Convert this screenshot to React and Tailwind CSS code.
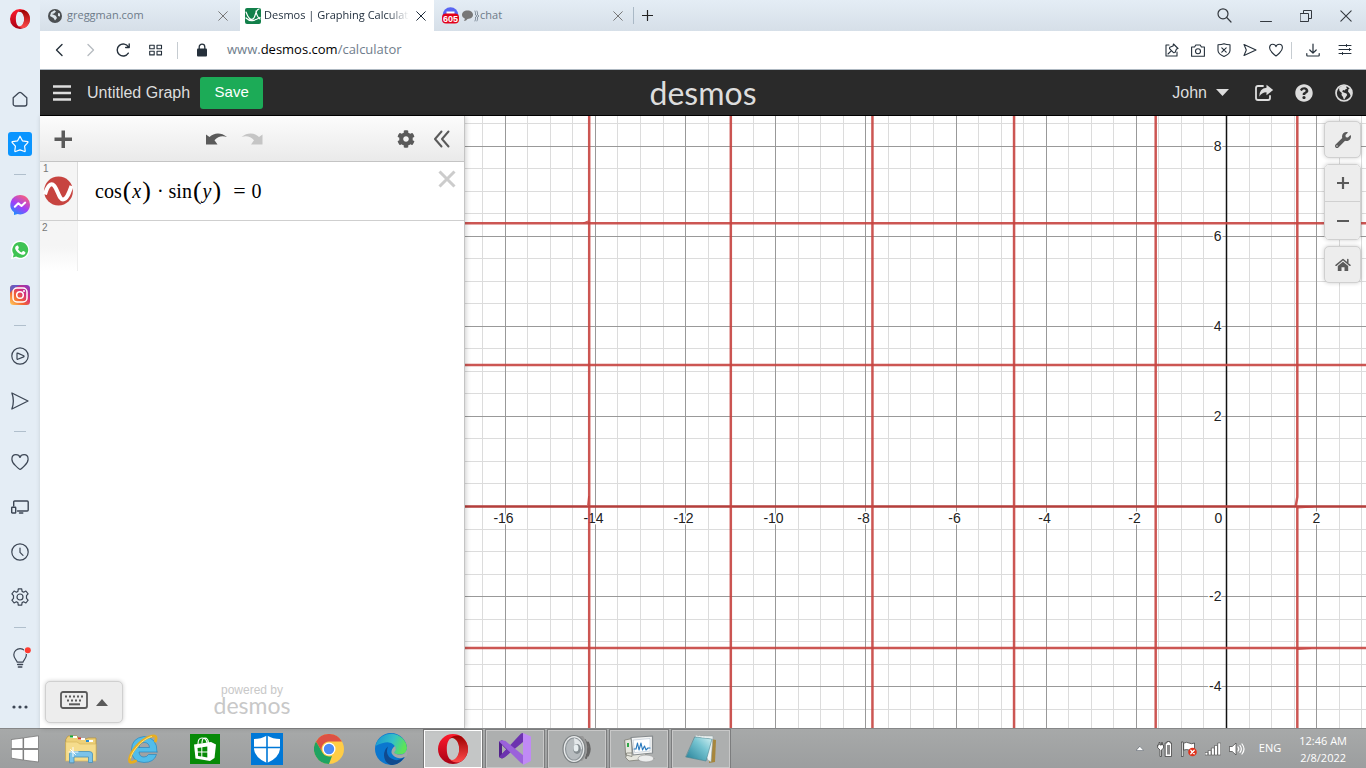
import React, { useLayoutEffect, useRef, useState } from "react";
import { FaWrench, FaCog, FaQuestionCircle } from "react-icons/fa";

const UI = "font-['Open_Sans','Noto_Sans',sans-serif]";
const ARIAL = "font-['Liberation_Sans',Arial,sans-serif]";

function Icon({ w = 20, h, vb, children, className = "", sw = 1.2, color = "currentColor" }) {
  const hh = h || w;
  return (
    <svg
      width={w}
      height={hh}
      viewBox={vb || `0 0 ${w} ${hh}`}
      fill="none"
      stroke={color}
      strokeWidth={sw}
      strokeLinecap="round"
      strokeLinejoin="round"
      aria-hidden="true"
      className={`shrink-0 ${className}`}
    >
      {children}
    </svg>
  );
}

function OperaLogo({ size, id }) {
  return (
    <Icon w={size} vb="0 0 30 30" color="none">
      <defs>
        <linearGradient id={`${id}a`} x1="0" y1="0" x2="0" y2="1">
          <stop offset="0" stopColor="#ff1b2d" />
          <stop offset="1" stopColor="#a70014" />
        </linearGradient>
        <linearGradient id={`${id}b`} x1="0" y1="0" x2="0" y2="1">
          <stop offset="0" stopColor="#9c0000" />
          <stop offset="1" stopColor="#ff4b4b" />
        </linearGradient>
      </defs>
      <path
        fillRule="evenodd"
        fill={`url(#${id}a)`}
        d="M15 0a15 15 0 1 0 0 30a15 15 0 1 0 0-30zM15 3.500c4 0 6.200 5.200 6.200 11.500S19 26.500 15 26.500S8.800 21.300 8.800 15S11 3.500 15 3.500z"
      />
      <path
        fill={`url(#${id}b)`}
        d="M11.500 4.800C16 .5 22 .8 25 3.900A15 15 0 0 1 25 26.100C22 29.200 16 29.500 11.500 25.200C16.500 28 21.200 22 21.200 15S16.500 2 11.500 4.800z"
      />
    </Icon>
  );
}

function SideItem({ label, children }) {
  return (
    <button aria-label={label} className="flex h-[45px] w-10 shrink-0 items-center justify-center">
      {children}
    </button>
  );
}

function Separator() {
  return (
    <div className="flex h-4 w-10 shrink-0 items-center justify-center">
      <div className="h-px w-3 bg-[#b0bfcc]" />
    </div>
  );
}

function Sidebar() {
  return (
    <nav aria-label="Browser sidebar" className="flex w-10 shrink-0 flex-col bg-[#e4edf5] text-[#3c4654]">
      <button aria-label="Opera menu" className="mb-[38px] flex h-10 items-center justify-center">
        <OperaLogo size={20} id="menu" />
      </button>
      <SideItem label="Home">
        <Icon w={16} sw={1.3}>
          <path d="M1.200 6.800L6.500 2Q8 .8 9.500 2l5.300 4.800V13a2 2 0 0 1-2 2H3.200a2 2 0 0 1-2-2z" />
        </Icon>
      </SideItem>
      <SideItem label="Speed dials">
        <span className="flex size-6 items-center justify-center rounded-[3px] bg-[#0a95ff] text-white">
          <Icon w={18} sw={1.2}>
            <path d="M9 1.200l2.400 4.600l5.200 .8a.6 .6 0 0 1 .2 1L13.600 11.200l.6 4.800q0 .7-.7 .5L9 14.900L4.500 16.500q-.7 .2-.7-.5l.6-4.800L1.200 7.600a.6 .6 0 0 1 .2-1l5.200-.8z" />
          </Icon>
        </span>
      </SideItem>
      <Separator />
      <SideItem label="Messenger">
        <Icon w={20} color="none">
          <defs>
            <linearGradient id="msg" x1=".2" y1="1" x2=".8" y2="0">
              <stop offset="0" stopColor="#1592ff" />
              <stop offset=".45" stopColor="#a040fa" />
              <stop offset="1" stopColor="#ff6273" />
            </linearGradient>
          </defs>
          <path fill="url(#msg)" d="M10 0a10 9.700 0 1 1-2.500 19.100L4 20v-2.800A9.700 9.700 0 0 1 10 0z" />
          <path stroke="#fff" strokeWidth="2" d="M4.800 11.800L8.300 8.300L11.500 11L15.200 7.600" />
        </Icon>
      </SideItem>
      <SideItem label="WhatsApp">
        <Icon w={20} color="none">
          <path fill="#fff" d="M10.300 .6a9.300 9.300 0 1 1-4.600 17.500L.9 19.300l1.300-4.700A9.300 9.300 0 0 1 10.300 .6z" />
          <path fill="#3fc353" d="M10.300 2a7.900 7.900 0 1 1-4.200 14.600L2.900 17.400l.8-3.100A7.900 7.900 0 0 1 10.300 2z" />
          <path fill="#fff" d="M7.200 5.400c.5 0 .7 0 1 .7l.6 1.500c.2 .5-.2 .9-.8 1.600c1 1.700 2.100 2.500 3.600 3.200l1.100-1.200c.3-.3 .5-.2 .8-.1l1.600 .8c.5 .3 .3 1.300 0 1.800c-.8 1.200-2.400 1.300-3.800 .8c-3-1-5-3-6-5.400c-.6-1.500 .4-3.600 1.900-3.700z" />
        </Icon>
      </SideItem>
      <SideItem label="Instagram">
        <Icon w={20} color="none">
          <defs>
            <linearGradient id="ig" x1="0" y1="1" x2="1" y2="0">
              <stop offset="0" stopColor="#ffd060" />
              <stop offset=".35" stopColor="#f4662f" />
              <stop offset=".65" stopColor="#d42f7f" />
              <stop offset="1" stopColor="#7d3ac8" />
            </linearGradient>
          </defs>
          <rect width="20" height="20" rx="3.500" fill="url(#ig)" />
          <path fill="#4b62d8" opacity=".8" d="M0 8V3.500A3.500 3.500 0 0 1 3.500 0H11Q4 2 0 8z" />
          <rect x="3" y="3" width="14" height="14" rx="4" stroke="#fff" strokeWidth="1.500" />
          <circle cx="10" cy="10" r="3.300" stroke="#fff" strokeWidth="1.500" />
          <circle cx="14" cy="6" r="1" fill="#fff" />
        </Icon>
      </SideItem>
      <Separator />
      <SideItem label="Player">
        <Icon w={18}>
          <circle cx="9" cy="9" r="8.200" />
          <path d="M6 6.500v5.300q0 .7 .7 .5l6-2.400q.8-.6 0-1.200l-6-2.600q-.7-.2-.7 .4z" />
        </Icon>
      </SideItem>
      <SideItem label="My Flow">
        <Icon w={18} sw={1.300}>
          <path d="M.9 1L17 9L.9 17Q3.800 9 .9 1z" />
        </Icon>
      </SideItem>
      <Separator />
      <SideItem label="Bookmarks">
        <Icon w={18}>
          <path d="M9 16.300Q7.800 16 4.500 12.700C2 10.300 .9 8.400 .9 6.200C.9 3.600 2.600 1.700 4.900 1.700C6.900 1.700 8.500 2.800 9 4.500C9.500 2.800 11.100 1.700 13.100 1.700c2.300 0 4 1.900 4 4.500c0 2.200-1.100 4.100-3.600 6.500Q10.200 16 9 16.300z" />
        </Icon>
      </SideItem>
      <SideItem label="Connect devices">
        <Icon w={18} h={14} sw={1.400}>
          <path d="M2.700 6V2q0-1 1-1h12.500q1 0 1 1v8q0 1-1 1H6.500M8.500 13h3.300" />
          <rect x=".7" y="7.200" width="4" height="5.800" rx=".6" />
        </Icon>
      </SideItem>
      <SideItem label="History">
        <Icon w={18}>
          <circle cx="9" cy="9" r="8.200" />
          <path d="M9 5v4.400l3 3" />
        </Icon>
      </SideItem>
      <SideItem label="Settings">
        <Icon w={18}>
          <circle cx="9" cy="9" r="3" />
          <path d="M7.300 .9h3.400l.4 2.500l1.500 .8l2.300-1.200l2.200 2.800l-1.600 1.800v2.800l1.600 1.800l-2.200 2.800l-2.300-1.200l-1.500 .8l-.4 2.500H7.300l-.4-2.500l-1.500-.8L3.100 15L.9 12.200l1.600-1.800V7.600L.9 5.800L3.100 3l2.300 1.200l1.500-.8z" />
        </Icon>
      </SideItem>
      <Separator />
      <SideItem label="Tips">
        <Icon w={22}>
          <path d="M8.200 15.200C8 13 4.800 12 4.800 7.800A6.300 6.300 0 0 1 11.100 1.600a6.300 6.300 0 0 1 6.300 6.200c0 4.200-3.200 5.200-3.400 7.400z" />
          <path d="M8.700 17.500h4.800M9.400 20h3.400" strokeWidth="1.500" />
          <circle cx="18.800" cy="3.200" r="3.900" fill="#e4edf5" stroke="none" />
          <circle cx="18.800" cy="3.200" r="3" fill="#ff3b30" stroke="none" />
        </Icon>
      </SideItem>
      <button aria-label="More" className="mt-[5px] flex h-[45px] items-center justify-center">
        <Icon w={16} h={4} color="none">
          <circle cx="2" cy="2" r="1.600" fill="#3c4654" />
          <circle cx="8" cy="2" r="1.600" fill="#3c4654" />
          <circle cx="14" cy="2" r="1.600" fill="#3c4654" />
        </Icon>
      </button>
    </nav>
  );
}

function Cross({ w = 10, className = "", sw = 1 }) {
  return (
    <Icon w={w} vb="0 0 10 10" sw={sw} className={className}>
      <path d="M.7 .7L9.300 9.300M9.300 .7L.7 9.300" />
    </Icon>
  );
}

function TabBar() {
  return (
    <div className={`flex h-[31px] shrink-0 items-stretch bg-linear-to-b from-[#e4edf5] to-[#d6dfe8] text-[11px] ${UI}`}>
      <div className="flex w-[200px] items-center pr-3 pl-2 text-[#6d7b89]">
        <Icon w={14} color="none">
          <circle cx="7" cy="7" r="7" fill="#4b4f52" />
          <path fill="#dce5ec" d="M3 3.500L6.500 1.200L8 2.500L6 4.500L3.800 5L7.800 6.800L9 9L7 11.500L5.500 9L2 7zM10 4l2 .5v3L10 7z" />
        </Icon>
        <button className="ml-[5px] flex-1 text-left">greggman.com</button>
        <button aria-label="Close greggman.com" className="text-[#777]"><Cross /></button>
      </div>
      <div className="flex w-[194px] items-center bg-white pr-2 pl-[5px] text-[#1d2b3a]">
        <Icon w={16} color="none">
          <rect width="16" height="16" rx="2" fill="#12804a" />
          <path stroke="#fff" strokeWidth="1.200" d="M1 4C3 10 6 13 8.500 10.500S10 2 14 1M1 10C5 14 9 13 15 9.500M11 3Q12 9 15 11" />
        </Icon>
        <button className="ml-[3px] w-[145px] overflow-hidden mask-r-from-85% text-left whitespace-nowrap">
          Desmos | Graphing Calculator
        </button>
        <button aria-label="Close Desmos" className="ml-auto"><Cross /></button>
      </div>
      <div className="flex w-[200px] items-center pr-[11px] pl-2 text-[#6d7b89]">
        <Icon w={17} color="none">
          <circle cx="8.500" cy="8" r="7.800" fill="#5865f2" />
          <path fill="#fff" d="M4.500 4.500h8V7h-8z" />
          <rect x="0" y="6.500" width="17" height="10" rx="4" fill="#e3001b" />
          <text x="8.500" y="14.500" fill="#fff" fontSize="9" fontWeight="700" textAnchor="middle" fontFamily="Liberation Sans, sans-serif">605</text>
        </Icon>
        <button className="ml-[2px] flex flex-1 items-center">
          <Icon w={13} color="none">
            <path fill="#777" d="M6.500 1.500C10 1.500 12 3.500 12 5.800S10 10 6.500 10Q5.500 12 2.800 12Q4 10.800 3.800 9.500C2 8.800 1 7.500 1 5.800C1 3.500 3 1.500 6.500 1.500z" />
          </Icon>
          <Icon w={6} h={12} sw={0.8}>
            <path d="M1 1Q2 3 1.500 5L3 6L1.500 7Q2 9 1 11M3 1Q4 3 3.500 5L5 6L3.500 7Q4 9 3 11" />
          </Icon>
          chat
        </button>
        <button aria-label="Close chat" className="text-[#777]"><Cross /></button>
      </div>
      <button aria-label="New tab" className="-ml-px my-[7px] flex items-center border-l border-[#aab9c6] pl-2 text-[#222]">
        <Icon w={11}><path d="M5.500 .5v10M.5 5.500h10" /></Icon>
      </button>
      <div className="ml-auto flex items-center gap-7 pr-[14px] text-[#33383e]">
        <button aria-label="Search tabs">
          <Icon w={15} sw={1.200}><circle cx="6" cy="5.800" r="5" /><path d="M9.700 9.500L14 14" /></Icon>
        </button>
        <button aria-label="Minimize">
          <Icon w={12} sw={1}><path d="M.5 11.500h11" /></Icon>
        </button>
        <button aria-label="Restore">
          <Icon w={12} sw={1}><path d="M.5 3.500h8v8h-8zM3.500 3.500v-3h8v8h-3" /></Icon>
        </button>
        <button aria-label="Close window"><Cross w={12} sw={0.9} /></button>
      </div>
    </div>
  );
}

function AddressBar() {
  return (
    <div className={`flex h-[39px] shrink-0 items-center border-b border-[#aeb8c1] bg-white pr-[14px] pl-[15px] text-[#25303b] ${UI}`}>
      <div className="flex items-center gap-[18px]">
        <button aria-label="Back"><Icon w={8} h={14} sw={1.400}><path d="M7 1.500L1.500 7L7 12.500" /></Icon></button>
        <button aria-label="Forward" className="text-[#b7bcc1]"><Icon w={16} h={14} sw={1.400}><path d="M7 1.500L12.500 7L7 12.500" /></Icon></button>
        <button aria-label="Reload"><Icon w={16} h={14} sw={1.400}><path d="M13.300 10.200A6 6 0 1 1 13.400 4M14.200 1v3.500H10.700" /></Icon></button>
        <button aria-label="Tab grid"><Icon w={14} h={12} sw={1.100}><path d="M.7 1.200h4.500v3.600H.7zM8 1.200h4.500v3.600H8zM.7 7.300h4.500v3.600H.7zM8 7.300h4.500v3.600H8z" /></Icon></button>
      </div>
      <div className="ml-[14px] h-[17px] w-px bg-[#c6ccd1]" />
      <Icon w={12} h={14} className="ml-[18px]" color="none">
        <path stroke="#25303b" strokeWidth="1.300" d="M3.200 6V4a2.800 2.800 0 0 1 5.600 0v2" />
        <rect x="1" y="5.500" width="10" height="8" rx="1" fill="#25303b" />
      </Icon>
      <div className="ml-[19px] text-[13px] text-[#6f7d8c]">
        www.<span className="text-black">desmos.com</span>/calculator
      </div>
      <div className="ml-auto flex items-center gap-3">
        <button aria-label="Pin page"><Icon w={14} sw={1.100}><path d="M4 2H1v11h11V9M8.500 1L13 5.500L11.500 6L10 9.500L8.500 9.700L4.500 5.700L4.800 4.200L8 3zM6.500 7.700L3 11" /></Icon></button>
        <button aria-label="Snapshot"><Icon w={14} h={13} sw={1.100}><path d="M.6 3h3L4.800 1h4.400l1.200 2h3v9.300H.6z" /><circle cx="7" cy="7.300" r="2.500" /></Icon></button>
        <button aria-label="Ad blocker"><Icon w={14} sw={1.100}><path d="M7 .7Q9.500 1.800 13 1.800V7.500Q13 11 7 13.500Q1 11 1 7.500V1.800Q4.500 1.800 7 .7zM4.800 4.800l4.400 4.400M9.200 4.800L4.800 9.200" /></Icon></button>
        <button aria-label="Send to My Flow"><Icon w={14} sw={1.100}><path d="M1 1.500L13 7L1 12.500L3.300 7z" /></Icon></button>
        <button aria-label="Add to bookmarks"><Icon w={14} sw={1.100}><path d="M7 13Q5.500 12 3.500 10Q.6 7.200 .6 4.800C.6 2.800 2 1.300 3.700 1.300S6.600 2.200 7 3.600C7.400 2.200 8.600 1.300 10.300 1.300s3.100 1.500 3.100 3.500q0 2.400-2.900 5.200Q8.500 12 7 13z" /></Icon></button>
      </div>
      <div className="ml-2 h-[17px] w-px bg-[#c6ccd1]" />
      <button aria-label="Downloads" className="ml-[14px]"><Icon w={14}><path d="M.8 10.500v1.800q0 .7 .7 .7h11q.7 0 .7-.7v-1.800M7 1v9M3.800 7L7 10.200L10.200 7" /></Icon></button>
      <button aria-label="Easy setup" className="ml-[18px]"><Icon w={14} h={12} sw={1}><path d="M1 1.500h12M1 5.500h12M1 9.500h12M8.500 .5v2M11.500 4.500v2M4.500 8.500v2" /></Icon></button>
    </div>
  );
}

function DesmosHeader() {
  return (
    <header className={`grid h-[46px] shrink-0 grid-cols-[1fr_auto_1fr] items-center border-b border-black bg-[#2a2a2a] text-base text-[#ddd] ${ARIAL}`}>
      <div className="flex items-center pl-3">
        <button aria-label="Open menu">
          <Icon w={20} h={18} sw={2.600}><path strokeLinecap="butt" d="M1 2.500h18M1 9h18M1 15.500h18" /></Icon>
        </button>
        <button className="ml-[15px]">Untitled Graph</button>
        <button className="ml-[10px] h-8 w-[63px] rounded-[3px] bg-[#1cab57] text-[15px] text-white">Save</button>
      </div>
      <a href="/" className="font-['Lato',sans-serif] text-[32px] leading-none">desmos</a>
      <div className="flex items-center justify-end pr-[13px]">
        <button className="flex items-center gap-[9px]">
          John
          <Icon w={13} h={7} color="none"><path fill="#ddd" d="M0 0h13L6.500 7z" /></Icon>
        </button>
        <button aria-label="Share" className="ml-[25px]">
          <Icon w={20} h={18} color="none">
            <path stroke="#ddd" strokeWidth="1.800" d="M9 2H4Q2 2 2 4v10q0 2 2 2h10q2 0 2-2v-2" />
            <path fill="#ddd" d="M12.500 .8L19.200 6L12.500 11.200V8.300Q7.500 8.300 5.300 12.800Q5.300 4.200 12.500 3.800z" />
          </Icon>
        </button>
        <button aria-label="Help" className="ml-[21px]"><FaQuestionCircle size={18} /></button>
        <button aria-label="Language" className="ml-[22px]">
          <Icon w={18} color="none">
            <circle cx="9" cy="9" r="8" stroke="#ddd" strokeWidth="1.700" />
            <path fill="#ddd" d="M4 4L7.500 1.200L12 1.500L11.200 3.200L12.200 4.500L10.500 5.200L9.800 6.500L8.500 6L7 7.200L8.700 8.500L11.500 9.500L12.200 11L10.500 13.500L9 16L8 13L6.500 11L6.800 9L4.500 7zM13.500 5l2.300-.5l1 4.500l-1 3l-1-2.200L13 7.500z" />
          </Icon>
        </button>
      </div>
    </header>
  );
}

function Paren({ children }) {
  return <span className="mx-px text-[26px] leading-none">{children}</span>;
}

function ExpressionPanel() {
  return (
    <section aria-label="Expressions" className="relative z-10 flex w-[425px] shrink-0 flex-col border-r border-[#c4c4c4] bg-white shadow-[1px_0_5px_rgba(0,0,0,0.2)]">
      <div className="flex h-[46px] shrink-0 items-center border-b border-[#c4c4c4] bg-linear-to-b from-[#fcfcfc] to-[#eaeaea] text-[#5a5a5a]">
        <button aria-label="Add item" className="ml-[14px]">
          <Icon w={18} color="none"><path fill="#5a5a5a" d="M7.500 .5h3.500v7h7v3.500h-7v7H7.500v-7h-7V7.500h7z" /></Icon>
        </button>
        <button aria-label="Undo" className="ml-[133px]">
          <Icon w={22} h={14} color="none"><path fill="#5a5a5a" d="M1 2.500L4.500 5C9 .5 16 0 22 5Q14.500 2.500 9.500 8.300L12.500 12.500H1z" /></Icon>
        </button>
        <button aria-label="Redo" className="ml-[14px]">
          <Icon w={22} h={14} color="none"><path fill="#c5c5c5" d="M21.500 2.500L18 5C13.500 .5 6.500 0 .5 5Q8 2.500 13 8.300L10 12.500h11.500z" /></Icon>
        </button>
        <button aria-label="Edit list" className="ml-auto"><FaCog size={18} /></button>
        <button aria-label="Hide list" className="mr-[13px] ml-[18px]">
          <Icon w={18} sw={2}><path d="M8.500 1.500L2 9L8.500 16.500M15.500 1.500L9 9L15.500 16.500" /></Icon>
        </button>
      </div>
      <div className="flex h-[59px] shrink-0 border-b border-[#cfcfcf]">
        <div className="flex w-[38px] flex-col border-r border-[#dcdcdc] bg-[#f5f5f5] pl-[3px]">
          <span className={`h-[14px] text-[10px] leading-[14px] text-[#777] ${ARIAL}`}>1</span>
          <button aria-label="Hide expression 1" className="size-[30px]">
            <Icon w={30} color="none">
              <circle cx="15.500" cy="15" r="14.400" fill="#c74440" />
              <path stroke="#fff" strokeWidth="4" strokeLinecap="butt" d="M2 18.500C4.500 9.500 8 6 11 9.500C15 14 16 23.500 20 23.500C24 23.500 26 17 28.500 10" />
            </Icon>
          </button>
        </div>
        <div role="math" aria-label="cos(x) · sin(y) = 0" className="flex flex-1 items-center pl-[17px] font-['Liberation_Serif','Times_New_Roman',serif] text-xl text-black">
          cos<Paren>(</Paren><i>x</i><Paren>)</Paren>
          <span className="mx-[5px]">·</span>
          sin<Paren>(</Paren><i>y</i><Paren>)</Paren>
          <span className="mr-[6px] ml-[11px] text-[22px] leading-none">=</span>
          <span>0</span>
        </div>
        <button aria-label="Delete expression 1" className="mt-2 mr-2 self-start text-[#ccc]">
          <Icon w={18} sw={3} vb="0 0 18 18"><path strokeLinecap="butt" d="M1.500 1.500l15 15M16.500 1.500l-15 15" /></Icon>
        </button>
      </div>
      <div className="flex h-[50px] shrink-0">
        <label htmlFor="expr2" className={`w-[38px] border-r border-[#eee] bg-linear-to-b from-[#f5f5f5] from-50% to-white pl-[2px] text-[10px] leading-[14px] text-[#777] ${ARIAL}`}>2</label>
        <input id="expr2" type="text" className="min-w-0 flex-1 px-4 font-['Liberation_Serif',serif] text-xl outline-none" />
      </div>
      <div className="mt-auto grid grid-cols-[1fr_auto_1fr] items-end px-[5px] pb-[5px]">
        <button aria-label="Show keypad" className="flex h-[42px] w-[78px] items-center justify-center gap-2 rounded-[5px] border border-[#d0d0d0] bg-[#ededed] shadow-[0_0_4px_rgba(0,0,0,0.2)]">
          <Icon w={28} h={18} color="none" className="-mt-1">
            <rect x="1" y="1" width="26" height="16" rx="2" stroke="#5a5a5a" strokeWidth="1.800" />
            <path stroke="#5a5a5a" strokeWidth="2" strokeLinecap="butt" strokeDasharray="2 2" d="M5 5.500h19M7 9.500h15" />
            <path stroke="#5a5a5a" strokeWidth="2" strokeLinecap="butt" d="M9 13.300h11" />
          </Icon>
          <Icon w={12} h={7} color="none"><path fill="#5a5a5a" d="M0 7h12L6 0z" /></Icon>
        </button>
        <div className="pb-[10px] text-center text-[#c8c8c8]">
          <div className={`text-xs leading-[14px] ${ARIAL}`}>powered by</div>
          <div className="font-['Lato',sans-serif] text-[23px] leading-4">desmos</div>
        </div>
      </div>
    </section>
  );
}

const ORIGIN = { x: 761, y: 390 };
const UNIT_X = 45.08;
const UNIT_Y = 45.04;
const px = (u) => Math.round(ORIGIN.x + u * UNIT_X) + 0.5;
const py = (u) => Math.round(ORIGIN.y - u * UNIT_Y) + 0.5;
const half = Array.from({ length: 160 }, (_, i) => (i - 80) / 2);
const minor = half.filter((u) => u % 2 !== 0);
const major = half.filter((u) => u % 2 === 0);
const curveX = Array.from({ length: 24 }, (_, i) => (i - 12 + 0.5) * Math.PI);
const curveY = Array.from({ length: 24 }, (_, i) => (i - 12) * Math.PI);

function Graph() {
  const ref = useRef(null);
  const [size, setSize] = useState({ w: 0, h: 0 });
  useLayoutEffect(() => {
    const measure = () => {
      const box = ref.current.getBoundingClientRect();
      setSize({ w: box.width, h: box.height });
    };
    measure();
    window.addEventListener("resize", measure);
    return () => window.removeEventListener("resize", measure);
  }, []);
  const inX = (u) => px(u) > 16 && px(u) < size.w - 16;
  const inY = (u) => py(u) > 12 && py(u) < size.h - 12;
  const rx = ORIGIN.x + 0.5 + (Math.PI / 2) * UNIT_X;
  const lx = ORIGIN.x + 0.5 - 4.5 * Math.PI * UNIT_X;
  return (
    <svg ref={ref} role="img" aria-label="Graph of cos(x) · sin(y) = 0" className="absolute inset-0 size-full">
      <g stroke="#dcdcdc">
        {minor.map((u) => <line key={`v${u}`} x1={px(u)} x2={px(u)} y1="0" y2="100%" />)}
        {minor.map((u) => <line key={`h${u}`} x1="0" x2="100%" y1={py(u)} y2={py(u)} />)}
      </g>
      <g stroke="#999">
        {major.map((u) => <line key={`v${u}`} x1={px(u)} x2={px(u)} y1="0" y2="100%" />)}
        {major.map((u) => <line key={`h${u}`} x1="0" x2="100%" y1={py(u)} y2={py(u)} />)}
      </g>
      <line x1={px(0)} x2={px(0)} y1="0" y2="100%" stroke="#111" strokeWidth="1.500" />
      <line x1="0" x2="100%" y1={py(0)} y2={py(0)} stroke="#111" strokeWidth="1.500" />
      <g fill="#222" fontSize="14" fontFamily="Liberation Sans, Arial, sans-serif" stroke="#fff" strokeWidth="3" paintOrder="stroke" strokeLinejoin="round">
        {major.filter(inX).map((u) => (
          <text key={`x${u}`} x={u === 0 ? px(0) - 8 : px(u) - (u < 0 ? 2 : 0)} y={py(0) + 16} textAnchor="middle">{u}</text>
        ))}
        {major.filter((u) => u !== 0 && inY(u)).map((u) => (
          <text key={`y${u}`} x={px(0) - 5} y={py(u) + 4} textAnchor="end">{u}</text>
        ))}
      </g>
      <g stroke="#c74440" strokeWidth="2.500" strokeOpacity=".9" fill="none">
        {curveX.filter((u) => Math.abs(u - Math.PI / 2) > 0.1).map((u) => {
          const x = ORIGIN.x + 0.5 + u * UNIT_X;
          return <line key={u} x1={x} x2={x} y1="0" y2="100%" />;
        })}
        {curveY.map((u) => {
          const y = ORIGIN.y + 0.5 - u * UNIT_X;
          return <line key={u} x1="0" x2="100%" y1={y} y2={y} />;
        })}
        <path d={`M${rx} 0V381L${rx - 1.5} 390`} />
        <line x1={rx} x2={rx} y1="390" y2="100%" />
        <path strokeWidth="1.200" d={`M${rx} 392L${rx + 16} 391M${rx} 533.500L${rx + 14} 532.500M${lx - 6} 107L${lx - 1} 105M${lx - 1.500} 389L${lx - 0.5} 380`} />
      </g>
    </svg>
  );
}

const toolBtn = "flex items-center justify-center border-[#d0d0d0] bg-[#ededed] text-[#5a5a5a]";

function GraphArea() {
  return (
    <main className="relative min-w-0 flex-1 overflow-hidden bg-white">
      <Graph />
      <div className="absolute top-[5px] right-[5px] flex w-[37px] flex-col gap-[6px]">
        <button aria-label="Graph settings" className={`h-[37px] rounded-[5px] border shadow-[0_0_4px_rgba(0,0,0,0.2)] ${toolBtn}`}><FaWrench size={16} /></button>
        <div className="flex flex-col overflow-hidden rounded-[5px] border border-[#d0d0d0] shadow-[0_0_4px_rgba(0,0,0,0.2)]">
          <button aria-label="Zoom in" className={`h-[37px] border-b ${toolBtn}`}>
            <Icon w={12} sw={2.200}><path strokeLinecap="butt" d="M6 0v12M0 6h12" /></Icon>
          </button>
          <button aria-label="Zoom out" className={`h-[37px] ${toolBtn}`}>
            <Icon w={12} sw={2.200}><path strokeLinecap="butt" d="M0 6h12" /></Icon>
          </button>
        </div>
        <button aria-label="Default viewport" className={`h-[37px] rounded-[5px] border shadow-[0_0_4px_rgba(0,0,0,0.2)] ${toolBtn}`}>
          <Icon w={16} h={14} color="none">
            <path stroke="#5a5a5a" strokeWidth="1.500" d="M1 7.300L8 1.500l7 5.800M12.800 1.500v3" />
            <path fill="#5a5a5a" d="M8 3.800L13.200 8v5H9.500V9.200h-3V13H2.800V8z" />
          </Icon>
        </button>
      </div>
    </main>
  );
}

function TaskItem({ label, state = "idle", children }) {
  const look =
    state === "active"
      ? "border border-white bg-[#c4c6c6] outline outline-[#777]"
      : state === "open"
        ? "border border-[#c8c8c8] bg-[#adafaf] outline outline-[#7c7d7e]"
        : "";
  return (
    <button aria-label={label} className={`flex h-[38px] w-[58px] shrink-0 items-center justify-center ${look}`}>
      {children}
    </button>
  );
}

function Taskbar() {
  return (
    <footer className={`flex h-10 shrink-0 items-center border-t border-[#868788] bg-linear-to-b from-[#a7a9a9] to-[#9c9e9f] text-white ${UI}`}>
      <button aria-label="Start" className="mr-[2px] flex w-[50px] justify-center">
        <Icon w={28} color="none">
          <path fill="#fff" stroke="#777" strokeWidth=".8" d="M.5 4.500L12 3v10.500H.5zM13 2.800L27.500 .8v12.700H13zM.5 14.500H12V25L.5 23.200zM13 14.500h14.500V27L13 25.200z" />
        </Icon>
      </button>
      <div className="flex items-center gap-1">
        <TaskItem label="File Explorer">
          <Icon w={34} h={30} color="none">
            <path fill="#edd078" stroke="#b99435" strokeWidth=".7" d="M2 5L4 2h9l2 3h7l2-1h8v22H2z" />
            <path fill="#fff" d="M6 2h7v2H6zM14 4h7v2h-7zM22 6h7v2h-7z" />
            <path fill="#13a838" d="M6 1.500h3v2H6z" /><path fill="#d93b2b" d="M14 3.500h3v2h-3z" /><path fill="#268bd2" d="M22 6h3v2h-3z" />
            <path fill="#f5dc8c" stroke="#d9b85c" strokeWidth=".7" d="M2 8h11l3 2h16v17H2z" />
            <path fill="#7cc3ea" stroke="#478fb8" strokeWidth=".8" d="M5.500 28.500V20q0-2.500 2.500-2.500h17Q28.500 17.500 28.500 20v8.500h-4V23H10v5.500z" />
            <path stroke="#fff" strokeWidth="1" d="M9 13.500v9M5 18h9M6.500 15.500l5 5" />
          </Icon>
        </TaskItem>
        <TaskItem label="Internet Explorer">
          <Icon w={32} h={30} color="none">
            <path fill="#52bdea" stroke="#2b86bd" strokeWidth=".7" d="M30 18H12q.5 5 5 5q3 0 4.500-2.500h8Q27 28.500 17 28.500Q4.500 28 4.500 16T17 2.500Q30.500 3.500 30 18zM12 13.500h10.500Q22 8.500 17.200 8.500T12 13.500z" />
            <path stroke="#e8ae1f" strokeWidth="2.800" d="M8.500 27Q2 30.500 2.500 25.500C3.500 18 13 6 23 2.500Q31-.2 28.500 7" />
            <path stroke="#ffe27a" strokeWidth="1" d="M3.500 24C5 17 15 5 24.500 2.500" />
          </Icon>
        </TaskItem>
        <TaskItem label="Store">
          <Icon w={30} color="none">
            <rect width="30" height="30" fill="#078a07" />
            <path stroke="#fff" strokeWidth="1.200" d="M8 10Q8 4 12 4t5 4.500M12 9Q12 4 15 4t3.500 5" />
            <path fill="#fff" d="M4 10.500L21 8l5 2.500L24.500 24L20 27L5.500 24.500z" />
            <path fill="#078a07" d="M7.500 14l3.800-.6v4H7.800zM12.300 13.200l5-.8v5h-5zM7.900 18.400h3.400v4l-3.200-.5zM12.300 18.400h5v5l-5-.8z" />
          </Icon>
        </TaskItem>
        <TaskItem label="Windows Defender">
          <Icon w={32} color="none">
            <rect width="32" height="32" fill="#0078d7" />
            <path fill="#fff" d="M16 2.500Q22 6 29 6v10Q28 25 16 30Q4 25 3 16V6Q10 6 16 2.500z" />
            <path stroke="#0078d7" strokeWidth="1.600" d="M16 2v28.500M2 14.500h28" />
          </Icon>
        </TaskItem>
        <TaskItem label="Google Chrome">
          <Icon w={30} color="none">
            <circle cx="15" cy="15" r="15" fill="#ffcd46" />
            <path fill="#dd5144" d="M2 7.500A15 15 0 0 1 28 7.500H15a7.500 7.500 0 0 0-6.500 11.200z" />
            <path fill="#1ea362" d="M2 7.500L8.500 18.700A7.500 7.500 0 0 0 18 21.900L15 30A15 15 0 0 1 2 7.500z" />
            <circle cx="15" cy="15" r="6.500" fill="#fff" /><circle cx="15" cy="15" r="5.200" fill="#4c8bf5" />
          </Icon>
        </TaskItem>
        <TaskItem label="Microsoft Edge">
          <Icon w={32} color="none">
            <defs>
              <linearGradient id="edge" x1="0" y1="0" x2="1" y2=".3">
                <stop offset="0" stopColor="#1693d3" /><stop offset=".6" stopColor="#35c1c6" /><stop offset="1" stopColor="#5ce35a" />
              </linearGradient>
            </defs>
            <circle cx="16" cy="16" r="16" fill="#0b77cf" />
            <path fill="url(#edge)" d="M.5 13A16 16 0 0 1 32 15q0 6.500-7.500 6.500Q20 21.500 18.500 19.500Q22 16 19 12Q14 6 .5 13z" />
            <path fill="#a5a7a7" d="M20 13q2 3.500-1 6.500Q20.500 21.500 25 21.500q5.500 0 7-5.500v7l-3 1.500Q20 27 16.500 20Q16 16 20 13z" />
            <path fill="#104a8e" d="M13 13.500Q9 24 20 27q5 .8 9.500-3Q24 32.500 16 32Q9.500 30 9 22.500q0-6 4-9z" />
          </Icon>
        </TaskItem>
        <TaskItem label="Opera" state="active"><OperaLogo size={30} id="task" /></TaskItem>
        <TaskItem label="Visual Studio" state="open">
          <Icon w={32} color="none">
            <path fill="#52218a" fillRule="evenodd" d="M0 8.500l3-1.300l5 3.800v11l-5 3.500L0 24zM3 12v9l4.500-4.500z" />
            <path fill="#6c33af" d="M3 25.500L0 24L22 .5L24 0v9L5.500 24.500z" />
            <path fill="#9b62db" d="M0 8.500L3 7.200l3.500 .8L25 23v8.500L22 30z" />
            <path fill="#c08af5" d="M24 0l8 3.500V28l-8 4z" />
          </Icon>
        </TaskItem>
        <TaskItem label="Sound" state="open">
          <Icon w={32} h={30} color="none">
            <path stroke="#666" strokeWidth="2" d="M24 6q5 9 1 18M27 8.500q3.500 6.500 0 13" />
            <path fill="#999" d="M12 2h10q5 7 4 14t-5 11H12z" />
            <ellipse cx="13" cy="15" rx="11" ry="13.500" fill="#e7e9ea" stroke="#7d8284" />
            <ellipse cx="13" cy="15" rx="8.500" ry="11" fill="#b6bbbe" stroke="#90979b" />
            <path fill="#e3e7e9" d="M13 4q8 2 8 11L14 18z" />
            <ellipse cx="16" cy="15" rx="3.800" ry="5" fill="#848c90" /><ellipse cx="15" cy="14" rx="2.500" ry="3.600" fill="#e8eef0" />
          </Icon>
        </TaskItem>
        <TaskItem label="Resource Monitor" state="open">
          <Icon w={32} h={28} color="none">
            <path fill="#e5e5dd" stroke="#7d7d75" strokeWidth=".8" d="M2 5l7-1.500v18L3 20zM4 18h18l3 6L6 26l-3-3z" />
            <path fill="#2fa747" d="M4 8h2v4H4z" />
            <path fill="#f4f5f5" stroke="#868b8e" d="M8 2.500L29.500 1v17L10 20z" />
            <path fill="#fff" stroke="#a8b8c8" strokeWidth=".5" d="M10.500 5L27 3.500V16L12 17.500z" />
            <path stroke="#2778bd" strokeWidth="1.100" d="M11 14h2l1.500-6L16 15l2-7l1.500 7l2-4l1.500 4l2-2h2" />
            <ellipse cx="23" cy="23.500" rx="8" ry="3.500" fill="#eceded" stroke="#999" strokeWidth=".7" />
          </Icon>
        </TaskItem>
        <TaskItem label="Notepad" state="open">
          <Icon w={32} h={30} color="none">
            <defs>
              <linearGradient id="note" x1="0" y1="1" x2="1" y2="0">
                <stop offset="0" stopColor="#237e96" /><stop offset=".6" stopColor="#76c4d1" /><stop offset="1" stopColor="#d5f1f3" />
              </linearGradient>
            </defs>
            <path fill="#a7863b" d="M26 5l5 1l-1 22l-6 1z" />
            <path fill="#f1f4f4" stroke="#91a1a3" strokeWidth=".6" d="M11 2h17l-2 26l-3-2z" />
            <path fill="url(#note)" stroke="#4a8490" strokeWidth=".6" d="M10 3l17 2l-6 22L1 23z" />
            <path stroke="#e8efef" strokeWidth="1.200" strokeDasharray="1 2" d="M11 2l17 2" />
          </Icon>
        </TaskItem>
      </div>
      <div className="ml-auto flex items-center gap-2 pr-[19px]">
        <button aria-label="Show hidden icons" className="mr-[5px]"><Icon w={8} h={5} color="none"><path fill="#fff" stroke="#68707a" strokeWidth=".6" d="M.3 4.500h7.400L4 .5z" /></Icon></button>
        <Icon w={16} h={18} color="none">
          <path fill="#fff" stroke="#444" strokeWidth=".8" d="M8.500 3h1.500V1.500h3V3h1.500v13.500h-6zM1 5h1V2.500h1V5h1.500V2.500h1V5h1v3L4.500 10v6.500h-1.500V10L1 8z" />
          <path fill="#888" d="M10 5h3v9.500h-3z" />
        </Icon>
        <Icon w={16} h={18} color="none">
          <path fill="#fff" stroke="#444" strokeWidth=".8" d="M.7 2h1.500v14.500H.7zM3 3q2.500-1.500 5 0t5.500 0v7q-3 1-5.500 0t-5 0z" />
          <circle cx="11.500" cy="12" r="4.300" fill="#e0321c" /><path stroke="#fff" strokeWidth="1.300" d="M9.800 10.300l3.400 3.400M13.200 10.300l-3.400 3.400" />
        </Icon>
        <Icon w={16} h={14} color="none">
          <path fill="#fff" stroke="#555" strokeWidth=".6" d="M.3 10.500h2.600v2.500H.3zM3.500 8.500h2.600V13H3.500zM6.700 6h2.600v7H6.700zM9.900 3.500h2.600V13H9.900zM13.100 1h2.600v12h-2.600z" />
        </Icon>
        <Icon w={16} h={14} color="none">
          <path fill="#fff" stroke="#444" strokeWidth=".7" d="M.7 4.500h2.600L7 1v12L3.300 9.500H.7z" />
          <path stroke="#fff" strokeWidth="1.200" d="M9 5q1.500 2 0 4M11 3.500q2.700 3.500 0 7M13 2q4 5 0 10" />
        </Icon>
        <button className="ml-[6px] text-[11px]">ENG</button>
        <time className="ml-[10px] text-center text-[11px] leading-[17px]">
          <span className="block">12:46 AM</span>
          <span className="block">2/8/2022</span>
        </time>
      </div>
    </footer>
  );
}

export default function App() {
  return (
    <div className="flex h-screen flex-col overflow-hidden">
      <div className="flex min-h-0 flex-1">
        <Sidebar />
        <div className="flex min-w-0 flex-1 flex-col">
          <TabBar />
          <AddressBar />
          <DesmosHeader />
          <div className="flex min-h-0 flex-1">
            <ExpressionPanel />
            <GraphArea />
          </div>
        </div>
      </div>
      <Taskbar />
    </div>
  );
}
